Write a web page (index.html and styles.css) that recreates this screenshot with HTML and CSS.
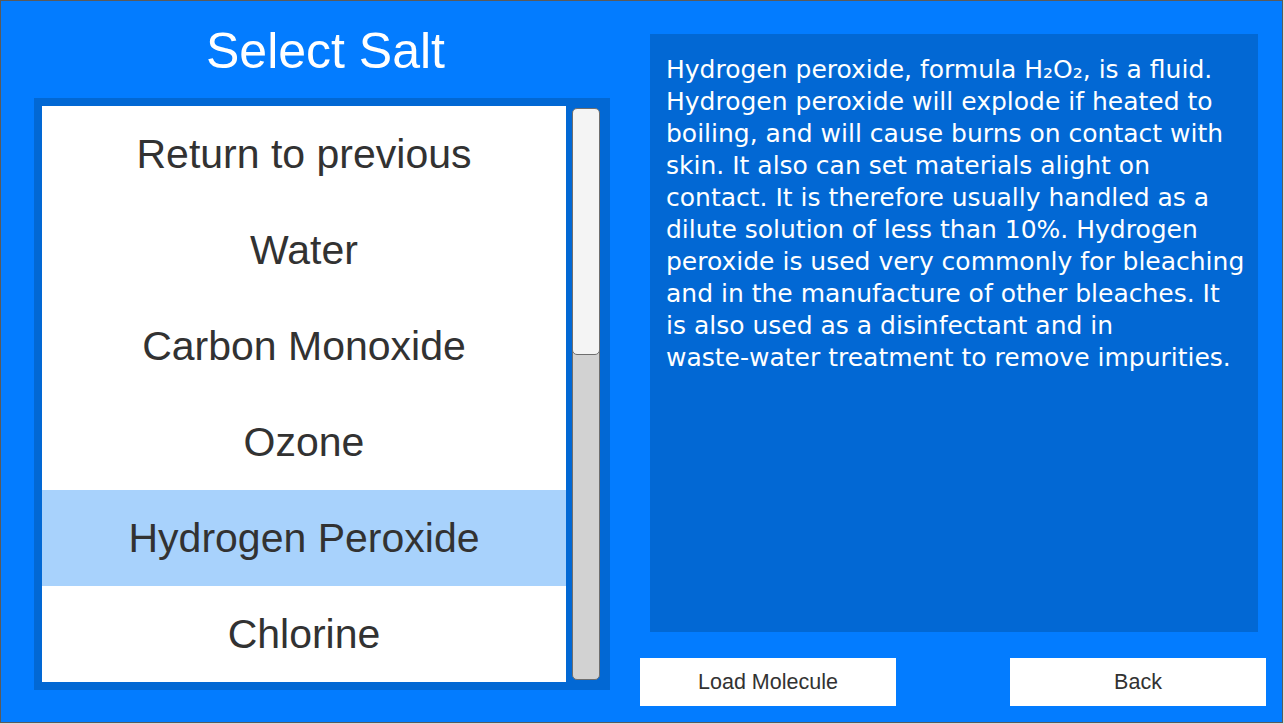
FILE: index.html
```html
<!DOCTYPE html>
<html>
<head>
<meta charset="utf-8">
<link rel="stylesheet" href="styles.css">
</head>
<body>
<div class="frame">
  <div class="left">
    <h1 class="title">Select Salt</h1>
    <div class="listbox">
      <ul class="list">
        <li class="item">Return to previous</li>
        <li class="item">Water</li>
        <li class="item">Carbon Monoxide</li>
        <li class="item">Ozone</li>
        <li class="item selected">Hydrogen Peroxide</li>
        <li class="item">Chlorine</li>
      </ul>
      <div class="scrollbar"><div class="thumb"></div></div>
    </div>
  </div>
  <div class="right">
    <div class="panel">
      <p class="desc">Hydrogen peroxide, formula H₂O₂, is a fluid. Hydrogen peroxide will explode if heated to boiling, and will cause burns on contact with skin. It also can set materials alight on contact. It is therefore usually handled as a dilute solution of less than 10%. Hydrogen peroxide is used very commonly for bleaching and in the manufacture of other bleaches. It is also used as a disinfectant and in <span class="nowrap">waste-water</span> treatment to remove impurities.</p>
    </div>
    <div class="buttons">
      <button class="btn">Load Molecule</button>
      <button class="btn">Back</button>
    </div>
  </div>
</div>
</body>
</html>
```
FILE: styles.css
```css
html, body {
  margin: 0;
  padding: 0;
  background: #d8d8d8;
}
.frame {
  box-sizing: border-box;
  width: 1283px;
  height: 723px;
  border: 1px solid #5a5a5a;
  background: #037cff;
  display: flex;
  font-family: "Liberation Sans", Arial, sans-serif;
}
.left {
  width: 639px;
  display: flex;
  flex-direction: column;
}
.title {
  margin: 0;
  height: 97px;
  padding-left: 10px;
  box-sizing: border-box;
  text-align: center;
  font-weight: normal;
  font-size: 50px;
  line-height: 50px;
  padding-top: 25px;
  color: #ffffff;
}
.listbox {
  margin-left: 33px;
  width: 576px;
  height: 592px;
  box-sizing: border-box;
  padding: 8px 10px 8px 8px;
  background: #0268d4;
  display: flex;
  gap: 6px;
}
.list {
  list-style: none;
  margin: 0;
  padding: 0;
  width: 524px;
  background: #ffffff;
  display: flex;
  flex-direction: column;
}
.item {
  height: 96px;
  display: flex;
  align-items: center;
  justify-content: center;
  font-size: 41px;
  color: #323232;
  box-sizing: border-box;
}
.item.selected {
  background: #a8d2fc;
}
.scrollbar {
  margin: 2px 0;
  width: 28px;
  box-sizing: border-box;
  background: #d2d2d2;
  border: 1px solid #6e6e6e;
  border-radius: 5px;
  display: flex;
  flex-direction: column;
  overflow: hidden;
}
.thumb {
  height: 247px;
  box-sizing: border-box;
  margin: -1px -1px 0 -1px;
  background: #f4f4f4;
  border: 1px solid #6e6e6e;
  border-radius: 5px;
}
.right {
  width: 626px;
  display: flex;
  flex-direction: column;
}
.panel {
  margin: 33px 8px 0 10px;
  height: 598px;
  background: #0268d4;
  box-sizing: border-box;
  padding: 20px 12px 0 16px;
}
.desc {
  margin: 0;
  font-family: "DejaVu Sans", Verdana, sans-serif;
  font-size: 25px;
  line-height: 32px;
  color: #ffffff;
}
.nowrap {
  white-space: nowrap;
}
.buttons {
  margin-top: 26px;
  display: flex;
  justify-content: space-between;
}
.btn {
  width: 256px;
  height: 48px;
  border: none;
  background: #ffffff;
  font-family: "Liberation Sans", Arial, sans-serif;
  font-size: 21.5px;
  color: #323232;
  padding: 1px 0 0 0;
}
```
